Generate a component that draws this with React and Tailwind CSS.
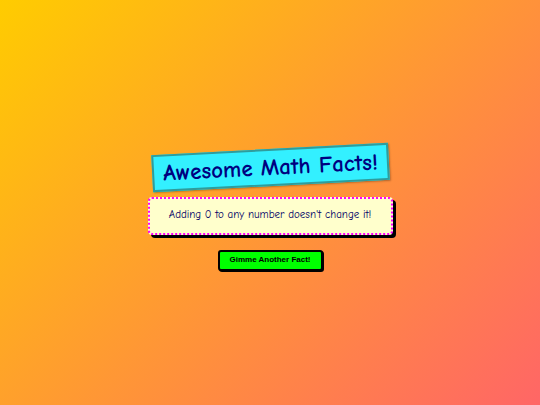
export default function App() {
  return (
    <div className="flex h-[405px] w-[540px] flex-col items-center justify-center bg-[linear-gradient(135deg,#ffcc00,#ff6666)] pt-[14px]">
      <div className="-rotate-3 border-2 border-[#2f9c9c] bg-[#33f0ff] px-[9px] py-[4px] shadow-[1px_1px_2px_rgba(0,0,0,0.3)]">
        <h1 className="font-['Comic_Sans_MS','Comic_Neue',cursive] text-[23px] font-bold leading-[25px] text-[#000080]">
          Awesome Math Facts!
        </h1>
      </div>
      <div className="mt-[11px] flex h-[38px] w-[245px] items-center justify-center rounded-[4px] border-2 border-dotted border-[#ff00ff] bg-[#ffffcc] shadow-[3px_3px_0_#000]">
        <p className="font-['Comic_Sans_MS','Comic_Neue',cursive] text-[11px] font-medium text-[#000066]">
          Adding 0 to any number doesn't change it!
        </p>
      </div>
      <button className="mt-[15px] h-[21px] w-[105px] rounded-[3px] border-2 border-black bg-[#00ff00] font-['Liberation_Sans',Arial,sans-serif] text-[8px] font-bold text-black shadow-[1px_1px_0_#000]">
        Gimme Another Fact!
      </button>
    </div>
  );
}
